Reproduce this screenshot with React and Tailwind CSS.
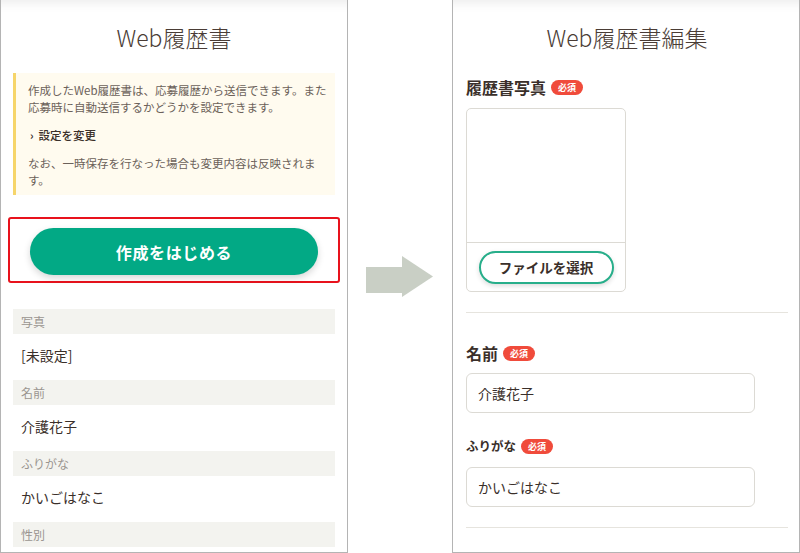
import React from 'react';

function Badge() {
  return (
    <span className="ml-[5px] inline-block h-[15px] rounded-full bg-[#f04b3b] px-[7px] text-[9px] font-bold leading-[15px] text-white">
      必須
    </span>
  );
}

function FieldRow({ label, value }) {
  return (
    <div>
      <div className="h-[25px] bg-[#f3f3ef] pl-[8px] text-[12px] leading-[25px] text-[#9a9590]">{label}</div>
      {value && (
        <div className="h-[46px] pl-[8px] pt-[10px] text-[14px] leading-[22px] text-[#3a2f2a]">{value}</div>
      )}
    </div>
  );
}

function ResumeView() {
  return (
    <div className="flex h-[553px] w-[348px] shrink-0 flex-col overflow-hidden border-x border-b border-[#b4b4b4] px-[12px] shadow-[inset_0_14px_12px_-12px_rgba(0,0,0,0.09)]">
      <h1 className="mt-[20px] h-[34px] text-center text-[23px] font-light leading-[34px] text-[#4a3c35]">Web履歴書</h1>

      {/* note */}
      <div className="mt-[19px] border-l-[3px] border-[#f6d56a] bg-[#fffbef] pb-[6px] pl-[12px] pr-[8px] pt-[9px] text-[11.5px] leading-[17px] text-[#6b6159]">
        <p>
          作成したWeb履歴書は、応募履歴から送信できます。また
          <br />
          応募時に自動送信するかどうかを設定できます。
        </p>
        <p className="mt-[11px] flex items-center gap-[5px] font-medium text-[#3a2f2a]">
          <span className="pl-[2px] text-[11px] font-bold">›</span>
          設定を変更
        </p>
        <p className="mt-[11px]">
          なお、一時保存を行なった場合も変更内容は反映されま
          <br />
          す。
        </p>
      </div>

      <div className="-mx-[5px] mt-[22px] rounded-[3px] border-2 border-[#e8121c] px-[20px] pb-[6px] pt-[9px]">
        <button className="h-[47px] w-full rounded-full bg-[#02a985] text-[16px] font-bold tracking-[0.04em] text-white shadow-[0_3px_7px_rgba(0,0,0,0.16)]">
          作成をはじめる
        </button>
      </div>

      <div className="mt-[26px]">
        <FieldRow label="写真" value="[未設定]" />
        <FieldRow label="名前" value="介護花子" />
        <FieldRow label="ふりがな" value="かいごはなこ" />
        <FieldRow label="性別" />
      </div>
    </div>
  );
}

function ResumeEdit() {
  return (
    <div className="flex h-[553px] w-[348px] shrink-0 flex-col overflow-hidden border-x border-b border-[#b4b4b4] pl-[13px] pr-[11px] shadow-[inset_0_14px_12px_-12px_rgba(0,0,0,0.09)]">
      <h1 className="mt-[20px] h-[34px] text-center text-[23px] font-light leading-[34px] text-[#4a3c35]">Web履歴書編集</h1>

      <div className="mt-[21px] flex h-[24px] items-center">
        <span className="text-[16px] font-bold text-[#3a2f2a]">履歴書写真</span>
        <Badge />
      </div>

      <div className="mt-[9px] flex h-[184px] w-[160px] flex-col overflow-hidden rounded-[5px] border border-[#dcdad4]">
        <div className="flex-1 border-b border-[#dcdad4]" />
        <div className="flex h-[48px] items-center justify-center">
          <button className="h-[33px] w-[135px] rounded-full border-2 border-[#27ae8a] bg-white text-[13.5px] font-bold text-[#3a2f2a] shadow-[0_2px_5px_rgba(0,0,0,0.14)]">
            ファイルを選択
          </button>
        </div>
      </div>

      <div className="mt-[20px] border-t border-[#e6e4de]" />

      <div className="mt-[28px] flex h-[24px] items-center">
        <span className="text-[16px] font-bold text-[#3a2f2a]">名前</span>
        <Badge />
      </div>
      <div className="mt-[8px] flex h-[40px] w-[289px] items-center rounded-[6px] border border-[#dcdad4] pl-[11px] text-[14px] text-[#3a2f2a]">
        介護花子
      </div>

      <div className="mt-[23px] flex h-[20px] items-center">
        <span className="text-[12.5px] font-bold text-[#3a2f2a]">ふりがな</span>
        <Badge />
      </div>
      <div className="mt-[11px] flex h-[40px] w-[289px] items-center rounded-[6px] border border-[#dcdad4] pl-[11px] text-[14px] text-[#3a2f2a]">
        かいごはなこ
      </div>

      <div className="mt-[20px] border-t border-[#e6e4de]" />
    </div>
  );
}

export default function App() {
  return (
    <div className="flex h-[553px] w-[800px] bg-white font-['Noto_Sans_CJK_JP',sans-serif]">
      <ResumeView />
      <div className="flex w-[104px] shrink-0 items-center justify-center">
        <svg width="68" height="42" viewBox="0 0 68 42">
          <rect x="0" y="11" width="38" height="26" fill="#c9cfc5" />
          <polygon points="36,0 67,20.5 36,41" fill="#c9cfc5" />
        </svg>
      </div>
      <ResumeEdit />
    </div>
  );
}
